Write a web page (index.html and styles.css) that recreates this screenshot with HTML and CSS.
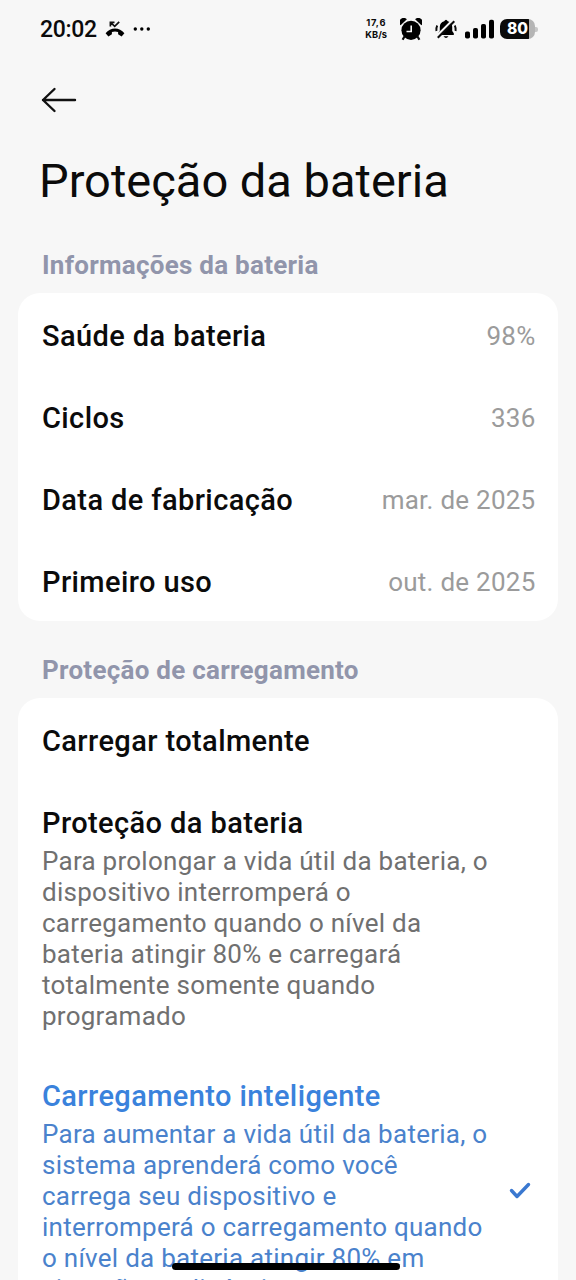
FILE: index.html
```html
<!DOCTYPE html>
<html lang="pt-BR">
<head>
<meta charset="utf-8">
<title>Proteção da bateria</title>
<link rel="stylesheet" href="styles.css">
</head>
<body>
<div class="screen">
  <header class="status">
    <div class="status-left">
      <span class="clock">20:02</span>
      <svg class="missed" width="20" height="16" viewBox="0 0 20 16"><path d="M.6 12.200C5.400 5.800 14.600 5.800 19.400 12.200L16.600 15.600L13.100 13.200V10.900Q10 10.100 6.900 10.900V13.200L3.400 15.600Z"/><path d="M5.400 5.400V1.300H9.500M5.800 1.700L9.700 5.400L14.200.9" fill="none" stroke="#111" stroke-width="1.700"/></svg>
      <svg class="dots" width="18" height="4" viewBox="0 0 18 4"><circle cx="2.300" cy="2" r="1.700"/><circle cx="8.800" cy="2" r="1.700"/><circle cx="15.300" cy="2" r="1.700"/></svg>
    </div>
    <div class="status-right">
      <div class="speed"><span class="speed-num">17,6</span><span>KB/s</span></div>
      <svg class="alarm" width="22" height="23" viewBox="0 0 22 23"><circle cx="11" cy="12.300" r="9.600"/><path d="M.6 7.200A4.200 4.200 0 0 1 6.900 1.200ZM21.400 7.200A4.200 4.200 0 0 0 15.100 1.200Z"/><path d="M4.500 18.500L2.600 21.800M17.500 18.500L19.400 21.800" stroke="#0b0b0b" stroke-width="2.200"/><path d="M11.200 7.500V13.500H6.500" fill="none" stroke="#f7f7f7" stroke-width="1.600"/></svg>
      <svg class="bell" width="22" height="22" viewBox="0 0 22 22"><path d="M3.200 17V15.200L4.800 13V9Q5 4.300 9.200 3.300Q11 0 12.800 3.300Q17.200 4.300 17.200 9V13L18.800 15.200V17ZM8.500 18.300H13.500Q11 21.800 8.500 18.300Z"/><path d="M1 18.800L17.800 2" stroke="#f7f7f7" stroke-width="2.400"/><path d="M2.800 19.800L19.300 3.300" stroke="#0b0b0b" stroke-width="2"/><path d="M1.400 13Q1 10 2.200 7.500M20.600 13Q21 10 19.800 7.500" fill="none" stroke="#0b0b0b" stroke-width="1.900"/></svg>
      <svg class="signal" width="30" height="20" viewBox="0 0 30 20"><rect x="0" y="12.500" width="5" height="7" rx="1.800"/><rect x="8" y="9" width="5" height="10.500" rx="1.800"/><rect x="16" y="5" width="5" height="14.500" rx="1.800"/><rect x="24" y=".8" width="5" height="18.700" rx="1.800"/></svg>
      <div class="battery"><span>80</span></div>
      <i class="battery-tip"></i>
    </div>
  </header>
  <svg class="back" width="36" height="26" viewBox="0 0 36 26"><path d="M13.500 2L2 13L13.500 24M2 13H34" fill="none" stroke="#111" stroke-width="2.400" stroke-linecap="round" stroke-linejoin="round"/></svg>
  <h1 class="title">Proteção da bateria</h1>
  <h2 class="section">Informações da bateria</h2>
  <section class="card">
    <div class="row"><span class="label">Saúde da bateria</span><span class="value">98%</span></div>
    <div class="row"><span class="label">Ciclos</span><span class="value">336</span></div>
    <div class="row"><span class="label">Data de fabricação</span><span class="value">mar. de 2025</span></div>
    <div class="row"><span class="label">Primeiro uso</span><span class="value">out. de 2025</span></div>
  </section>
  <h2 class="section section-charge">Proteção de carregamento</h2>
  <section class="card">
    <div class="row"><span class="label">Carregar totalmente</span></div>
    <div class="option">
      <div class="label">Proteção da bateria</div>
      <p class="desc">Para prolongar a vida útil da bateria, o<br>dispositivo interromperá o<br>carregamento quando o nível da<br>bateria atingir 80% e carregará<br>totalmente somente quando<br>programado</p>
    </div>
    <div class="option selected">
      <div>
        <div class="label">Carregamento inteligente</div>
        <p class="desc">Para aumentar a vida útil da bateria, o<br>sistema aprenderá como você<br>carrega seu dispositivo e<br>interromperá o carregamento quando<br>o nível da bateria atingir 80% em<br>situações aplicáveis</p>
      </div>
      <svg class="check" width="24" height="20" viewBox="0 0 24 20"><path d="M3.500 9.500L9 15.500L20.500 3.500" fill="none" stroke="#3a78d0" stroke-width="3.400" stroke-linecap="round" stroke-linejoin="round"/></svg>
    </div>
  </section>
  <div class="home-bar"></div>
</div>
</body>
</html>
```
FILE: styles.css
```css
body { margin: 0; background: #f7f7f7; font-family: Roboto, "Liberation Sans", sans-serif; color: #0b0b0b; }
.screen { position: relative; width: 576px; height: 1280px; overflow: hidden; display: flex; flex-direction: column; }
.status { height: 58px; flex: none; display: flex; justify-content: space-between; padding: 0 38px 0 40px; }
.status-left, .status-right { display: flex; align-items: center; }
.clock { font-size: 23px; font-weight: 500; letter-spacing: -.3px; }
.missed { margin-left: 8px; }
.dots { margin-left: 8px; }
.speed { display: flex; flex-direction: column; align-items: center; font-family: Inter, sans-serif; font-size: 9.3px; line-height: 12px; font-weight: 700; }
.speed-num { letter-spacing: .7px; }
.alarm { margin-left: 13px; }
.bell { margin-left: 13px; }
.signal { margin-left: 8px; }
.battery { margin-left: 5px; width: 35px; height: 20px; border-radius: 7px; background: linear-gradient(90deg, #0b0b0b 82%, #b5b5b5 82%); color: #fff; font-family: Inter, sans-serif; font-size: 15.5px; line-height: 20px; font-weight: 800; text-align: center; }
.battery-tip { width: 3px; height: 5px; background: #c8c8c8; border-radius: 0 2px 2px 0; }
.back { flex: none; margin: 29px 0 0 41px; }
.title { margin: 38px 0 0 39px; font-size: 47px; line-height: 60px; font-weight: 400; white-space: nowrap; }
.section { margin: 39px 0 13px 42px; font-size: 26px; line-height: 30px; font-weight: 700; letter-spacing: .26px; color: #9195ab; white-space: nowrap; }
.section-charge { margin-top: 34px; }
.card { flex: none; margin: 0 18px; background: #fff; border-radius: 22px; }
.row { height: 82px; box-sizing: border-box; padding: 4px 22.5px 0 24px; display: flex; align-items: center; justify-content: space-between; }
.label { font-size: 29px; line-height: 38px; font-weight: 500; letter-spacing: .4px; white-space: nowrap; }
.value { font-size: 26px; letter-spacing: .25px; color: #9b9b9b; white-space: nowrap; }
.option { height: 273px; box-sizing: border-box; padding: 24px 24px 0; }
.desc { margin: 4px 0 0; font-size: 26px; line-height: 31px; letter-spacing: .26px; color: #707070; white-space: nowrap; }
.selected { display: flex; justify-content: space-between; align-items: center; padding-right: 26px; padding-bottom: 21px; }
.selected .label { color: #3a82dc; }
.selected .desc { color: #4a82cc; }
.home-bar { position: absolute; left: 172px; top: 1263px; width: 228px; height: 7px; border-radius: 4px; background: #000; }
```
